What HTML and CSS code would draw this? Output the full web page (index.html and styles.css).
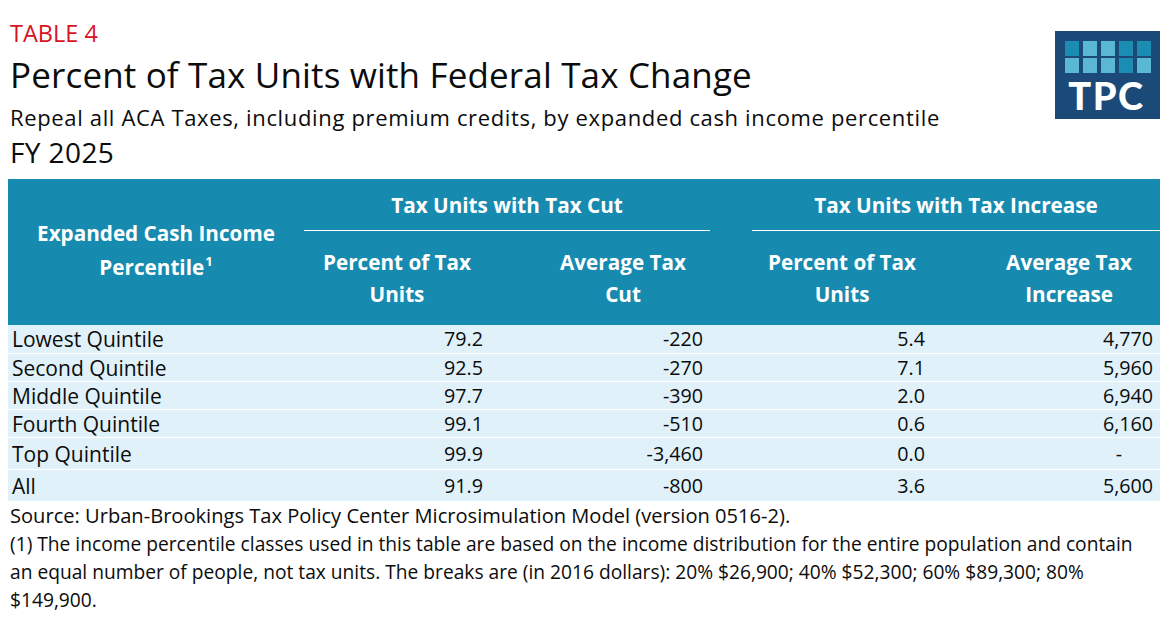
FILE: index.html
```html
<!DOCTYPE html>
<html lang="en">
<head>
<meta charset="utf-8">
<title>Table 4 - Percent of Tax Units with Federal Tax Change</title>
<link rel="stylesheet" href="styles.css">
</head>
<body>
<div class="page">
  <header class="top">
    <div class="titles">
      <div class="label">TABLE 4</div>
      <h1 class="title">Percent of Tax Units with Federal Tax Change</h1>
      <div class="subtitle">Repeal all ACA Taxes, including premium credits, by expanded cash income percentile</div>
      <div class="year">FY 2025</div>
    </div>
    <div class="logo">
      <div class="logo-grid">
        <span class="sq dk"></span><span class="sq lt"></span><span class="sq lt"></span><span class="sq dk"></span><span class="sq dk"></span>
        <span class="sq lt"></span><span class="sq lt"></span><span class="sq lt"></span><span class="sq dk"></span><span class="sq lt"></span>
      </div>
      <div class="logo-text">TPC</div>
    </div>
  </header>

  <table class="data">
    <colgroup>
      <col class="w-c1"><col class="w-c2"><col class="w-s1"><col class="w-c3"><col class="w-s2"><col class="w-c4"><col class="w-s3"><col class="w-c5">
    </colgroup>
    <thead>
      <tr class="hr1">
        <th rowspan="2" class="h-first">Expanded Cash Income<br>Percentile<sup>1</sup></th>
        <th colspan="3" class="h-group">Tax Units with Tax Cut</th>
        <th class="h-gap"></th>
        <th colspan="3" class="h-group">Tax Units with Tax Increase</th>
      </tr>
      <tr class="hr2">
        <th>Percent of Tax<br>Units</th>
        <th></th>
        <th>Average Tax<br>Cut</th>
        <th></th>
        <th>Percent of Tax<br>Units</th>
        <th></th>
        <th>Average Tax<br>Increase</th>
      </tr>
    </thead>
    <tbody>
      <tr class="row">
        <td class="name">Lowest Quintile</td><td class="num">79.2</td><td></td><td class="num">-220</td><td></td><td class="num">5.4</td><td></td><td class="num">4,770</td>
      </tr>
      <tr class="row">
        <td class="name">Second Quintile</td><td class="num">92.5</td><td></td><td class="num">-270</td><td></td><td class="num">7.1</td><td></td><td class="num">5,960</td>
      </tr>
      <tr class="row">
        <td class="name">Middle Quintile</td><td class="num">97.7</td><td></td><td class="num">-390</td><td></td><td class="num">2.0</td><td></td><td class="num">6,940</td>
      </tr>
      <tr class="row">
        <td class="name">Fourth Quintile</td><td class="num">99.1</td><td></td><td class="num">-510</td><td></td><td class="num">0.6</td><td></td><td class="num">6,160</td>
      </tr>
      <tr class="row tall">
        <td class="name">Top Quintile</td><td class="num">99.9</td><td></td><td class="num">-3,460</td><td></td><td class="num">0.0</td><td></td><td class="num dash">-</td>
      </tr>
      <tr class="row tall">
        <td class="name">All</td><td class="num">91.9</td><td></td><td class="num">-800</td><td></td><td class="num">3.6</td><td></td><td class="num">5,600</td>
      </tr>
    </tbody>
  </table>

  <footer class="notes">
    <p class="source">Source: Urban-Brookings Tax Policy Center Microsimulation Model (version 0516-2).</p>
    <p>(1) The income percentile classes used in this table are based on the income distribution for the entire population and contain<br>an equal number of people, not tax units. The breaks are (in 2016 dollars): 20% $26,900; 40% $52,300; 60% $89,300; 80%<br>$149,900.</p>
  </footer>
</div>
</body>
</html>
```

FILE: styles.css
```css
* { box-sizing: border-box; }

html, body {
  margin: 0;
  padding: 0;
  background: #ffffff;
}

body {
  font-family: "Open Sans", "Noto Sans", "Liberation Sans", sans-serif;
  color: #0c0c0c;
}

.page {
  width: 1165px;
  padding: 0 5px 0 8px;
}

/* ---------- Title block ---------- */
.top {
  display: flex;
  justify-content: space-between;
  align-items: flex-start;
  height: 179px;
}

.titles {
  padding: 18px 0 0 2px;
}

.label {
  color: #d9121f;
  font-size: 23.5px;
  line-height: 30px;
}

.title {
  margin: 4px 0 0;
  font-weight: 400;
  font-size: 35px;
  line-height: 46px;
  letter-spacing: 0.15px;
}

.subtitle {
  margin-top: 3px;
  font-size: 22px;
  line-height: 33px;
  letter-spacing: 0.65px;
}

.year {
  font-size: 28px;
  line-height: 36px;
  letter-spacing: 0.4px;
}

.logo {
  margin-top: 31px;
  width: 105px;
  height: 88px;
  background: #1b4a78;
  display: flex;
  flex-direction: column;
  align-items: center;
  padding-top: 10px;
}

.logo-grid {
  display: grid;
  grid-template-columns: repeat(5, 14px);
  grid-auto-rows: 15px;
  gap: 2px 4px;
}

.sq.dk { background: #1b8db3; }
.sq.lt { background: #5bb8d5; }

.logo-text {
  color: #ffffff;
  font-family: "Lato", "Liberation Sans", sans-serif;
  font-weight: 900;
  font-size: 38px;
  line-height: 38px;
  letter-spacing: 1.5px;
  margin-top: 3px;
  margin-left: -2px;
}

/* ---------- Table ---------- */
.data {
  width: 1152px;
  border-collapse: separate;
  border-spacing: 0;
  table-layout: fixed;
  font-size: 20px;
}

.w-c1 { width: 296px; }
.w-c2 { width: 186px; }
.w-s1 { width: 46px; }
.w-c3 { width: 174px; }
.w-s2 { width: 42px; }
.w-c4 { width: 180px; }
.w-s3 { width: 46px; }
.w-c5 { width: 182px; }

.data thead th {
  background: #178aaf;
  color: #ffffff;
  font-weight: 700;
  font-size: 20.7px;
  line-height: 32px;
  text-align: center;
  padding: 0;
}

.hr1 th.h-group,
.hr1 th.h-gap {
  height: 52px;
  vertical-align: middle;
}

.hr1 th.h-group {
  border-bottom: 1px solid #ffffff;
}

.hr1 th.h-first {
  vertical-align: middle;
  line-height: 34px;
  padding-bottom: 4px;
}

.h-first sup {
  font-size: 13px;
  line-height: 0;
  vertical-align: 9px;
  margin-left: 1px;
}

.hr2 th {
  height: 94px;
  vertical-align: middle;
  padding-bottom: 3px;
}

.data tbody td {
  background: #e0f1f9;
  font-size: 19.7px;
  line-height: 22px;
  height: 28px;
  padding: 0;
  border-top: 1px solid #ffffff;
  vertical-align: middle;
}

.data tbody tr:first-child td {
  border-top: 0;
}

.data tbody tr.tall td {
  height: 32px;
}

.data tbody td.name {
  font-size: 21px;
  padding-left: 4px;
  white-space: nowrap;
}

.data tbody td.num {
  text-align: right;
  padding-right: 7px;
}

.data tbody td.dash {
  padding-right: 38px;
}

/* ---------- Notes ---------- */
.notes {
  padding: 1px 0 0 2px;
  font-size: 19.2px;
  line-height: 28px;
  white-space: nowrap;
}

.notes p {
  margin: 0;
}

.notes .source {
  font-size: 20.1px;
}
```
